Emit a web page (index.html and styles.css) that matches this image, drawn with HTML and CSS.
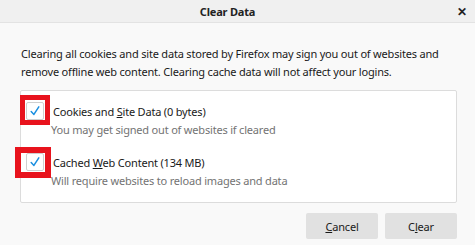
FILE: index.html
```html
<!DOCTYPE html>
<html>
<head>
<meta charset="utf-8">
<link rel="stylesheet" href="styles.css">
</head>
<body>
<div class="titlebar">
  <span class="title">Clear Data</span>
  <span class="close">✕</span>
</div>
<p class="intro">Clearing all cookies and site data stored by Firefox may sign you out of websites and<br>remove offline web content. Clearing cache data will not affect your logins.</p>
<div class="group">
  <div class="item item-first">
    <div class="row">
      <span class="check"><svg viewBox="0 0 18 18" width="18" height="18"><path d="M5.2 9.6 L7.9 12.4 L12.8 4.8" fill="none" stroke="#1a8fe0" stroke-width="1.5" stroke-linecap="round" stroke-linejoin="round"/></svg></span>
      <span class="label">Cookies and <u>S</u>ite Data (0 bytes)</span>
    </div>
    <div class="desc">You may get signed out of websites if cleared</div>
  </div>
  <div class="item item-second">
    <div class="row">
      <span class="check"><svg viewBox="0 0 18 18" width="18" height="18"><path d="M5.2 9.6 L7.9 12.4 L12.8 4.8" fill="none" stroke="#1a8fe0" stroke-width="1.5" stroke-linecap="round" stroke-linejoin="round"/></svg></span>
      <span class="label">Cached <u>W</u>eb Content (134 MB)</span>
    </div>
    <div class="desc">Will require websites to reload images and data</div>
  </div>
</div>
<div class="buttons">
  <button class="btn"><u>C</u>ancel</button>
  <button class="btn">C<u>l</u>ear</button>
</div>
<div class="mark mark-one"></div>
<div class="mark mark-two"></div>
</body>
</html>
```
FILE: styles.css
```css
html, body {
  margin: 0;
  padding: 0;
}
body {
  width: 475px;
  height: 245px;
  background: #f9f9f9;
  font-family: "Noto Sans", "Open Sans", sans-serif;
  font-size: 11px;
  letter-spacing: -0.19px;
  color: #1a1a1a;
  position: relative;
  overflow: hidden;
}
.titlebar {
  height: 22px;
  background: #f0f0f0;
  border-bottom: 1px solid #e3e3e3;
  display: flex;
  align-items: center;
  justify-content: center;
  padding-right: 20px;
  position: relative;
}
.title {
  font-weight: bold;
  font-size: 11px;
  letter-spacing: -0.2px;
  color: #222;
}
.close {
  position: absolute;
  right: 8px;
  top: 3px;
  font-size: 12px;
  font-weight: bold;
  color: #222;
}
.intro {
  margin: 0;
  padding: 22px 10px 0 21px;
  line-height: 18px;
  color: #1a1a1a;
  white-space: nowrap;
}
.group {
  margin: 9px 18px 0 20px;
  height: 111px;
  background: #fff;
  border: 1px solid #dcdcdc;
  border-radius: 2px;
  padding: 0;
}
.item-first {
  padding-top: 10px;
}
.item-second {
  padding-top: 13px;
}
.row {
  display: flex;
  align-items: center;
  height: 20px;
}
.check {
  width: 18px;
  height: 18px;
  box-sizing: border-box;
  margin-left: 5px;
  margin-right: 9px;
  background: #fff;
  border: 1px solid #cfcfcf;
  border-radius: 2px;
  display: flex;
  align-items: center;
  justify-content: center;
}
.check svg {
  display: block;
  flex: none;
}
.label {
  color: #1a1a1a;
}
.label u {
  text-decoration-thickness: 1px;
}
.desc {
  margin-left: 30px;
  line-height: 18px;
  color: #737373;
}
.buttons {
  display: flex;
  justify-content: flex-end;
  gap: 7px;
  margin: 10px 18px 0 0;
}
.btn {
  width: 72px;
  height: 26px;
  border: none;
  border-radius: 2px;
  background: #e1e1e1;
  font-family: "Noto Sans", "Open Sans", sans-serif;
  font-size: 11px;
  letter-spacing: -0.19px;
  color: #1a1a1a;
  padding: 0;
}
.mark {
  position: absolute;
  border-style: solid;
  border-color: #e8131d;
  box-sizing: border-box;
}
.mark-one {
  left: 20px;
  top: 95px;
  width: 30px;
  height: 30px;
  border-width: 5px;
}
.mark-two {
  left: 15px;
  top: 147px;
  width: 36px;
  height: 31px;
  border-width: 6px;
}
```
